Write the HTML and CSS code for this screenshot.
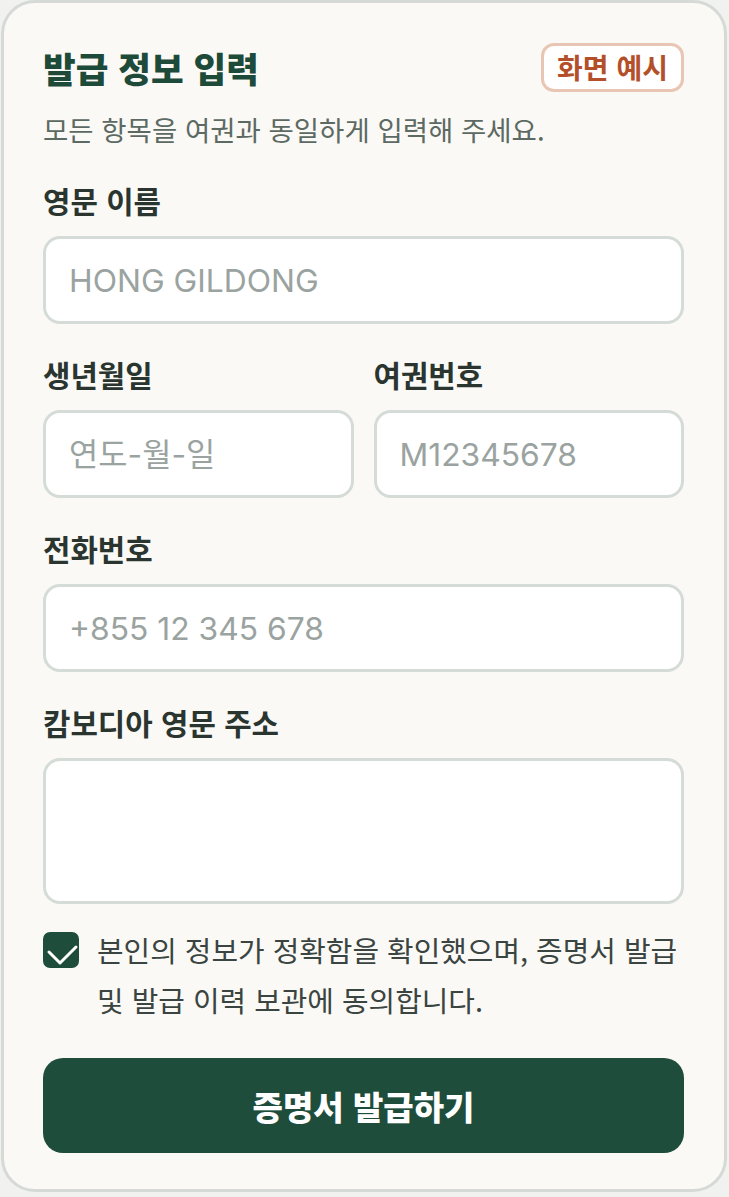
FILE: index.html
```html
<!DOCTYPE html>
<html lang="ko">
<head>
  <meta charset="utf-8">
  <title>발급 정보 입력</title>
  <link rel="stylesheet" href="styles.css">
</head>
<body>
  <form class="card">
    <div class="card-head">
      <div class="title-row">
        <h2>발급 정보 입력</h2>
        <span class="badge">화면 예시</span>
      </div>
      <p class="subtitle">모든 항목을 여권과 동일하게 입력해 주세요.</p>
    </div>

    <div class="fields">
      <div class="field">
        <label class="field-label" for="nameEn">영문 이름</label>
        <input type="text" id="nameEn" class="field-input" placeholder="HONG GILDONG">
      </div>

      <div class="field-row">
        <div class="field">
          <label class="field-label" for="birth">생년월일</label>
          <input type="text" id="birth" class="field-input" placeholder="연도-월-일">
        </div>
        <div class="field">
          <label class="field-label" for="passport">여권번호</label>
          <input type="text" id="passport" class="field-input" placeholder="M12345678">
        </div>
      </div>

      <div class="field">
        <label class="field-label" for="phone">전화번호</label>
        <input type="text" id="phone" class="field-input" placeholder="+855 12 345 678">
      </div>

      <div class="field">
        <label class="field-label" for="address">캄보디아 영문 주소</label>
        <textarea id="address" class="field-input field-area"></textarea>
      </div>
    </div>

    <label class="agree">
      <span class="check-box">
        <svg viewBox="0 0 36 36" fill="none" stroke="currentColor">
          <path d="M6 20l11 11 16-16" stroke-width="3" stroke-linecap="round" stroke-linejoin="round"/>
        </svg>
      </span>
      <span class="agree-text">본인의 정보가 정확함을 확인했으며, 증명서 발급 및 발급 이력 보관에 동의합니다.</span>
    </label>

    <button type="button" class="submit-button">증명서 발급하기</button>
  </form>
</body>
</html>
```

FILE: styles.css
```css
body {
  margin: 0;
  padding: 0 2px 3px 1px;
  font-family: "Noto Sans CJK KR", "Noto Sans", sans-serif;
  color: #2b3530;
  background: #f1f2f0;
}

.card {
  display: flex;
  flex-direction: column;
  padding: 40px 40px 36px 39px;
  background: #faf9f6;
  border: 3px solid #d6dad6;
  border-radius: 34px;
}

.card-head {
  display: flex;
  flex-direction: column;
  gap: 19px;
}

.title-row {
  display: flex;
  align-items: center;
  justify-content: space-between;
}

h2 {
  margin: 0;
  font-size: 35.5px;
  font-weight: 900;
  line-height: 44px;
  color: #1d4a39;
}

.badge {
  padding: 5px 13px 6px;
  font-size: 28px;
  font-weight: 700;
  line-height: 32px;
  color: #b34f29;
  background: #ffffff;
  border: 3px solid #e9c6b3;
  border-radius: 13px;
}

.subtitle {
  margin: 0;
  font-size: 27.5px;
  line-height: 36px;
  color: #5d6963;
}

.fields {
  display: flex;
  flex-direction: column;
  gap: 33px;
  margin-top: 36px;
}

.field {
  display: flex;
  flex-direction: column;
  gap: 19px;
  min-width: 0;
}

.field-row {
  display: grid;
  grid-template-columns: 1fr 1fr;
  gap: 20px;
}

.field-label {
  font-size: 29.8px;
  font-weight: 700;
  line-height: 34px;
  color: #2b3530;
}

.field-input {
  box-sizing: border-box;
  width: 100%;
  height: 88px;
  padding: 0 23px;
  font-family: Inter, "Noto Sans CJK KR", sans-serif;
  font-size: 31.8px;
  color: #2b3530;
  background: #ffffff;
  border: 3px solid #d5dbd7;
  border-radius: 17px;
  outline: none;
}

.field-input::placeholder {
  color: #9aa39f;
}

.field-area {
  display: block;
  height: 146px;
  resize: none;
}

.agree {
  display: flex;
  align-items: flex-start;
  gap: 18px;
  margin-top: 20px;
  cursor: pointer;
}

.check-box {
  flex-shrink: 0;
  width: 36px;
  height: 36px;
  margin-top: 8px;
  color: #ffffff;
  background: #1f4d3c;
  border-radius: 7px;
}

.check-box svg {
  display: block;
  width: 36px;
  height: 36px;
}

.agree-text {
  font-size: 28.9px;
  line-height: 50px;
  color: #3a4440;
}

.submit-button {
  height: 95px;
  margin-top: 34px;
  font-family: "Noto Sans CJK KR", sans-serif;
  font-size: 33px;
  font-weight: 900;
  color: #ffffff;
  background: #1f4d3c;
  border: none;
  border-radius: 20px;
  cursor: pointer;
}
```
